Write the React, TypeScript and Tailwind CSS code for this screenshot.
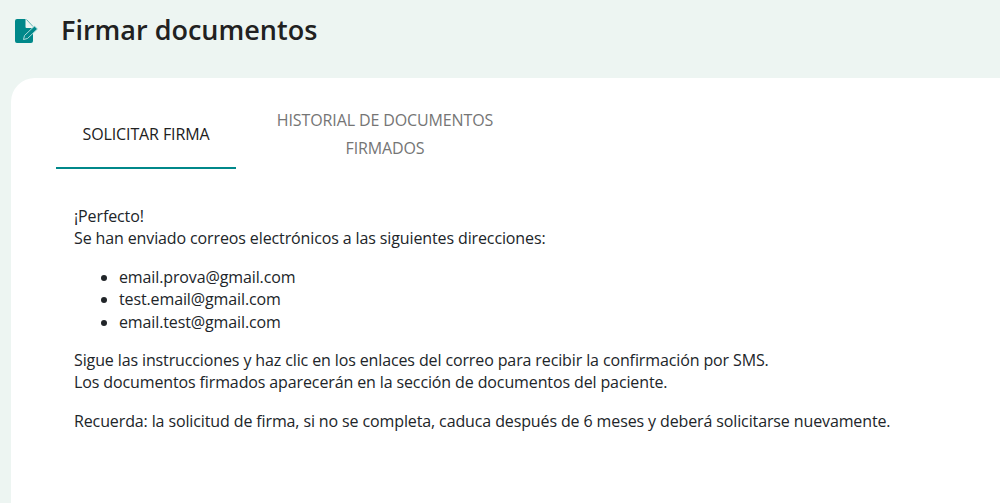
export default function App() {
  return (
    <div className="h-[503px] w-[1000px] overflow-hidden bg-[#edf5f2] font-['Open_Sans',sans-serif] tracking-[-0.12px] text-[#212529]">
      <header className="flex h-[78px] items-start pl-[15px] pt-[12px]">
        <svg width="24" height="25" viewBox="0 0 24 25" className="mt-[7px]">
          <path d="M2 0h8.500v8a1 1 0 0 0 1 1H18v13a2 2 0 0 1-2 2H2a2 2 0 0 1-2-2V2a2 2 0 0 1 2-2z" fill="#00888a" />
          <path d="M11.500 0.500l6.500 7" fill="none" stroke="#00888a" strokeWidth="1" opacity="0.6" />
          <path d="M8.500 20.500l1-4 10-9.500 3 3-10 9.500z" fill="#00888a" stroke="#bfe3e3" strokeWidth="0.9" />
        </svg>
        <h1 className="ml-[22px] text-[27px] leading-[36px] font-semibold tracking-normal text-[#212121]">Firmar documentos</h1>
      </header>
      <main className="ml-[11px] h-[425px] rounded-tl-[24px] bg-white">
        <div className="flex pl-[45px] pt-[28px] text-[16px] leading-[28px]">
          <div className="flex h-[63px] w-[180px] items-center justify-center border-b-2 border-[#00888a] pb-[6px] text-[#212121]">
            SOLICITAR FIRMA
          </div>
          <div className="w-[298px] text-center text-[#757575]">
            HISTORIAL DE DOCUMENTOS
            <br />
            FIRMADOS
          </div>
        </div>
        <div className="pl-[63px] pt-[36px] text-[16px] leading-[22.4px]">
          <p>
            ¡Perfecto!
            <br />
            Se han enviado correos electrónicos a las siguientes direcciones:
          </p>
          <ul className="mt-[16px] list-disc pl-[45px]">
            <li>email.prova@gmail.com</li>
            <li>test.email@gmail.com</li>
            <li>email.test@gmail.com</li>
          </ul>
          <p className="mt-[16px]">
            Sigue las instrucciones y haz clic en los enlaces del correo para recibir la confirmación por SMS.
            <br />
            Los documentos firmados aparecerán en la sección de documentos del paciente.
          </p>
          <p className="mt-[16px]">
            Recuerda: la solicitud de firma, si no se completa, caduca después de 6 meses y deberá solicitarse nuevamente.
          </p>
        </div>
      </main>
    </div>
  );
}
